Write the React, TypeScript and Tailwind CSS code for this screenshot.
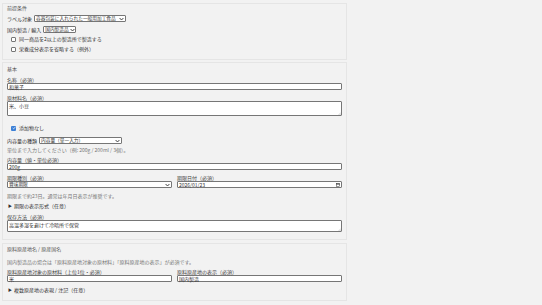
import React from "react";

const font = { fontFamily: '"Noto Sans CJK JP", "Noto Sans", sans-serif' };

function Chevron() {
  return (
    <svg width="5" height="4" viewBox="0 0 5 4" className="shrink-0">
      <path d="M0.6 1 L2.5 3 L4.4 1" fill="none" stroke="#333" strokeWidth="0.9" />
    </svg>
  );
}

function Select({ value, className = "" }: { value: string; className?: string }) {
  return (
    <div
      className={`flex h-[7px] items-center justify-between gap-[1px] rounded-[1px] border-[0.5px] border-[#767676] bg-white pl-[1px] pr-[1px] text-[4.7px] leading-none ${className}`}
    >
      <span className="whitespace-nowrap">{value}</span>
      <Chevron />
    </div>
  );
}

function Input({ value, right }: { value: string; right?: React.ReactNode }) {
  return (
    <div className="flex h-[7px] items-center justify-between rounded-[1px] border-[0.5px] border-[#767676] bg-white px-[1px] leading-none">
      <span>{value}</span>
      {right}
    </div>
  );
}

function Grip() {
  return (
    <svg width="3" height="3" viewBox="0 0 3 3" className="absolute bottom-[0.5px] right-[0.5px]">
      <path d="M3 0.5 L0.5 3 M3 1.8 L1.8 3" stroke="#999" strokeWidth="0.4" />
    </svg>
  );
}

function Textarea({ value, h }: { value: string; h: string }) {
  return (
    <div className={`relative rounded-[1px] border-[0.5px] border-[#767676] bg-white px-[1px] pt-[1px] leading-[6px] ${h}`}>
      {value}
      <Grip />
    </div>
  );
}

function Check({ checked, label }: { checked?: boolean; label: string }) {
  return (
    <div className="flex h-[10px] items-center gap-[3px] pl-[4px]">
      {checked ? (
        <span className="flex h-[5px] w-[5px] items-center justify-center rounded-[1px] bg-[#3b7fd6]">
          <svg width="4" height="4" viewBox="0 0 4 4">
            <path d="M0.7 2 L1.6 2.9 L3.3 1" fill="none" stroke="#fff" strokeWidth="0.7" />
          </svg>
        </span>
      ) : (
        <span className="h-[5px] w-[5px] rounded-[1px] border-[0.5px] border-[#767676] bg-white" />
      )}
      <span>{label}</span>
    </div>
  );
}

function Label({ children }: { children: React.ReactNode }) {
  return <div className="h-[5px] leading-[5px] text-[#444]">{children}</div>;
}

function Details({ label }: { label: string }) {
  return (
    <div className="flex h-[10px] items-center gap-[2px] pl-[1px]">
      <span className="text-[4px] leading-none">▶</span>
      <span>{label}</span>
    </div>
  );
}

export default function App() {
  return (
    <div className="min-h-[305px] w-[542px] bg-[#f2f2f2] text-[5px] text-[#333]" style={font}>
      <div className="w-[347px] pl-[2px] pt-[3px]">
        {/* 前提条件 */}
        <section className="h-[57px] border border-[#e5e5e5] px-[4px]">
          <div className="h-[8px] leading-[8px] text-[#555]">前提条件</div>
          <div className="mt-[3px] flex h-[7px] items-center gap-[2px]">
            <span>ラベル対象</span>
            <Select value="容器包装に入れられた一般用加工食品" className="w-[92px]" />
          </div>
          <div className="mt-[4px] flex h-[7px] items-center gap-[2px]">
            <span>国内製造 / 輸入</span>
            <Select value="国内製造品" className="w-[33px]" />
          </div>
          <div className="mt-[1px]">
            <Check label="同一商品を2以上の製造所で製造する" />
            <Check label="栄養成分表示を省略する（例外）" />
          </div>
        </section>

        {/* 基本 */}
        <section className="mt-[2px] h-[178px] border border-[#e5e5e5] px-[4px]">
          <div className="mt-[1px] h-[9px] leading-[9px] text-[#555]">基本</div>
          <div className="mt-[4px]">
            <Label>名称（必須）</Label>
            <div className="mt-[1px]">
              <Input value="和菓子" />
            </div>
          </div>
          <div className="mt-[5px]">
            <Label>原材料名（必須）</Label>
            <div className="mt-[1px]">
              <Textarea value="米、小豆" h="h-[15px]" />
            </div>
          </div>
          <div className="mt-[7px]">
            <Check checked label="添加物なし" />
          </div>
          <div className="mt-[4px] flex h-[7px] items-center gap-[2px]">
            <span>内容量の種類</span>
            <Select value="内容量（単一入力）" className="w-[83px]" />
          </div>
          <div className="mt-[3px] h-[5px] leading-[5px] text-[#777]">
            単位まで入力してください（例: 200g / 200ml / 3個）。
          </div>
          <div className="mt-[5px]">
            <Label>内容量（値・単位必須）</Label>
            <div className="mt-[1px]">
              <Input value="200g" />
            </div>
          </div>
          <div className="mt-[5px] grid grid-cols-2 gap-x-[5px]">
            <div>
              <Label>期限種別（必須）</Label>
              <div className="mt-[1px]">
                <Select value="賞味期限" />
              </div>
            </div>
            <div>
              <Label>期限日付（必須）</Label>
              <div className="mt-[1px]">
                <Input
                  value="2026/01/23"
                  right={
                    <svg width="4" height="4" viewBox="0 0 4 4">
                      <rect x="0.3" y="0.6" width="3.4" height="3.1" fill="none" stroke="#333" strokeWidth="0.5" />
                      <rect x="0.3" y="0.6" width="3.4" height="0.9" fill="#333" />
                    </svg>
                  }
                />
              </div>
            </div>
          </div>
          <div className="mt-[5px] h-[5px] leading-[5px] text-[#777]">
            期限まで約23日。通常は年月日表示が推奨です。
          </div>
          <div className="mt-[3px]">
            <Details label="期限の表示形式（任意）" />
          </div>
          <div className="mt-[3px]">
            <Label>保存方法（必須）</Label>
            <div className="mt-[1px]">
              <Textarea value="高温多湿を避けて冷暗所で保管" h="h-[12px]" />
            </div>
          </div>
        </section>

        {/* 原料原産地名 */}
        <section className="mt-[3px] h-[58px] border border-[#e5e5e5] px-[4px]">
          <div className="mt-[1px] h-[8px] leading-[8px] text-[#555]">原料原産地名 / 原産国名</div>
          <div className="mt-[6px] h-[5px] leading-[5px] text-[#777]">
            国内製造品の場合は「原料原産地対象の原材料」「原料原産地の表示」が必須です。
          </div>
          <div className="mt-[5px] grid grid-cols-2 gap-x-[5px]">
            <div>
              <Label>原料原産地対象の原材料（上位1位・必須）</Label>
              <div className="mt-[1px]">
                <Input value="米" />
              </div>
            </div>
            <div>
              <Label>原料原産地の表示（必須）</Label>
              <div className="mt-[1px]">
                <Input value="国内製造" />
              </div>
            </div>
          </div>
          <div className="mt-[3px]">
            <Details label="複数原産地の表現 / 注記（任意）" />
          </div>
        </section>
      </div>
    </div>
  );
}
